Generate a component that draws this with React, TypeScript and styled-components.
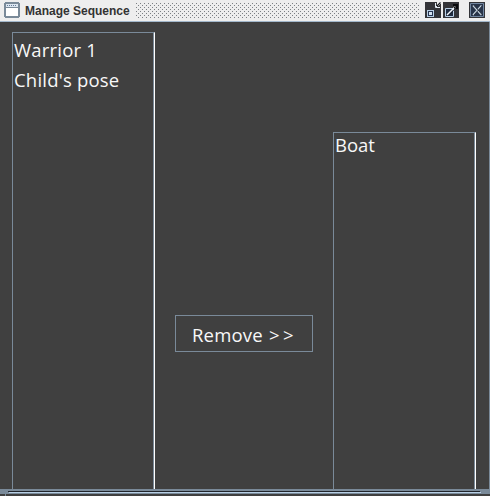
import React from 'react';
import styled, { createGlobalStyle } from 'styled-components';

const Global = createGlobalStyle`
  * { box-sizing: border-box; }
  body { margin: 0; background: #404040; overflow: hidden; }
`;

const Window = styled.div`
  width: 490px;
  height: 496px;
  display: flex;
  flex-direction: column;
  background: #404040;
  font-family: "Open Sans", "Noto Sans", sans-serif;
`;

const TitleBar = styled.header`
  height: 22px;
  flex: none;
  display: flex;
  align-items: flex-start;
  background: #eeeeee;
  border-bottom: 1px solid #a3b8cc;
  padding: 2px 4px 0 4px;
`;

const Title = styled.h1`
  margin: 0 0 0 5px;
  width: 111px;
  font: bold 12px/18px "Liberation Sans", Arial, sans-serif;
  color: #333333;
  white-space: nowrap;
`;

const DragTexture = styled.div`
  width: 283px;
  height: 15px;
  margin-top: 1px;
  background:
    conic-gradient(from 0deg at 1px 1px, transparent 75%, #7c8084 0) 0 0 / 4px 4px,
    conic-gradient(from 0deg at 1px 1px, transparent 75%, #7c8084 0) 2px 2px / 4px 4px;
`;

const Controls = styled.div`
  display: flex;
  margin-left: 6px;
  svg { display: block; }
`;

const ControlButton = styled.button<{ $gap?: number }>`
  width: 16px;
  height: 16px;
  padding: 0;
  border: 0;
  background: #333438;
  margin-left: ${(p) => p.$gap ?? 0}px;
`;

const Content = styled.main`
  flex: 1;
  min-height: 0;
  display: flex;
  align-items: flex-start;
  gap: 20px;
  padding: 10px 0 0 12px;
  border-right: 1px solid #7a8a99;
`;

const List = styled.ul<{ $top?: number; $row: number; $lead: number; $tracking: number }>`
  width: 143px;
  height: ${(p) => 457 - (p.$top ?? 0)}px;
  margin: ${(p) => p.$top ?? 0}px 0 0;
  padding: ${(p) => p.$lead}px 0 0 1px;
  list-style: none;
  border-left: 1px solid #7a8a99;
  border-top: 1px solid #7a8a99;
  border-right: 1px solid #ffffff;
  box-shadow: inset -1px 0 #7a8a99;
  color: #f8f8f8;
  font-size: 18.5px;
  letter-spacing: ${(p) => p.$tracking}px;
  line-height: ${(p) => p.$row}px;
`;

const RemoveButton = styled.button`
  width: 138px;
  height: 37px;
  margin: 283px 0 0;
  padding: 2px 0 0 16px;
  border: 1px solid #7a8a99;
  background: #404040;
  color: #f8f8f8;
  font: 18.5px/30px "Open Sans", "Noto Sans", sans-serif;
  letter-spacing: 0.2px;
  text-align: left;
  white-space: nowrap;
`;

const Chevrons = styled.span`
  letter-spacing: 3.5px;
  margin-left: 1px;
`;

const BottomEdge = styled.footer`
  height: 7px;
  flex: none;
  svg { display: block; }
`;

function WindowIcon() {
  return (
    <svg width="16" height="17" viewBox="0 0 16 17" shapeRendering="crispEdges">
      <path d="M1 0h14v1h1v14h-1v1H1v-1H0V1h1z" fill="#7a8a99" />
      <path d="M2 2h12v3H2z" fill="#dce6f0" />
      <path d="M2 6h12v8H2z" fill="#ffffff" />
      <path d="M3 3h1v1H3zM5 3h1v1H5zM7 3h1v1H7zM9 3h1v1H9zM11 3h1v1h-1z" fill="#657b99" />
    </svg>
  );
}

function MinimizeIcon() {
  return (
    <svg width="16" height="16" viewBox="0 0 16 16">
      <path d="M12 0h4v2h-1v1h-1v1h-2z" fill="#eeeeee" />
      <path d="M10.5 1v4.5H15M11 5l4-4" fill="none" stroke="#e6edf4" />
      <path d="M12 4l3.5-3.5" stroke="#15171c" strokeWidth="1.3" />
      <path d="M2 8h7v7H2z" fill="#b8cfe5" />
      <path d="M3 9h5v5H3z" fill="#26344f" />
      <path d="M4 10h3v3H4z" fill="#d4e2f0" />
    </svg>
  );
}

function MaximizeIcon() {
  return (
    <svg width="16" height="16" viewBox="0 0 16 16">
      <path d="M2.5 6.5h8v8h-8z" fill="#202c40" stroke="#b8cfe5" />
      <path d="M4 13L13 4" stroke="#f2f5f8" strokeWidth="1.5" />
      <path d="M5 14L15 4" stroke="#111722" strokeWidth="0.7" />
      <path d="M10 2h5v5h-2V5l-2 2V5l2-1h-3z" fill="#08090b" />
    </svg>
  );
}

function CloseIcon() {
  return (
    <svg width="16" height="16" viewBox="0 0 16 16">
      <path d="M1.5 1.5h13v13h-13z" fill="#273449" stroke="#7186a0" />
      <path d="M4 3.5L12.5 13M12.5 3.5L4 13" stroke="#c5d3df" strokeWidth="1.6" />
      <path d="M5 3.5L13.5 13M5 13L13 4" stroke="#111722" strokeWidth="0.7" />
    </svg>
  );
}

export default function App() {
  return (
    <>
      <Global />
      <Window>
        <TitleBar>
          <WindowIcon />
          <Title>Manage Sequence</Title>
          <DragTexture />
          <Controls>
            <ControlButton aria-label="Minimize"><MinimizeIcon /></ControlButton>
            <ControlButton aria-label="Maximize" $gap={2}><MaximizeIcon /></ControlButton>
            <ControlButton aria-label="Close" $gap={10}><CloseIcon /></ControlButton>
          </Controls>
        </TitleBar>
        <Content>
          <List $row={30} $lead={2} $tracking={0.2}>
            <li>Warrior 1</li>
            <li>Child's pose</li>
          </List>
          <RemoveButton>Remove <Chevrons>&gt;&gt;</Chevrons></RemoveButton>
          <List $top={100} $row={24} $lead={0} $tracking={0}>
            <li>Boat</li>
          </List>
        </Content>
        <BottomEdge>
          <svg width="490" height="7" viewBox="0 0 490 7" shapeRendering="crispEdges">
            <path d="M0 0h490v5H0z" fill="#7a8a99" />
            <path d="M8 2h472v1H8z" fill="#20242b" />
            <path d="M9 3h472v1H9z" fill="#b8cfe5" />
            <path d="M0 5h490v2H0z" fill="#404040" />
            <path d="M5 5h1v2H5z" fill="#7a8a99" />
          </svg>
        </BottomEdge>
      </Window>
    </>
  );
}
